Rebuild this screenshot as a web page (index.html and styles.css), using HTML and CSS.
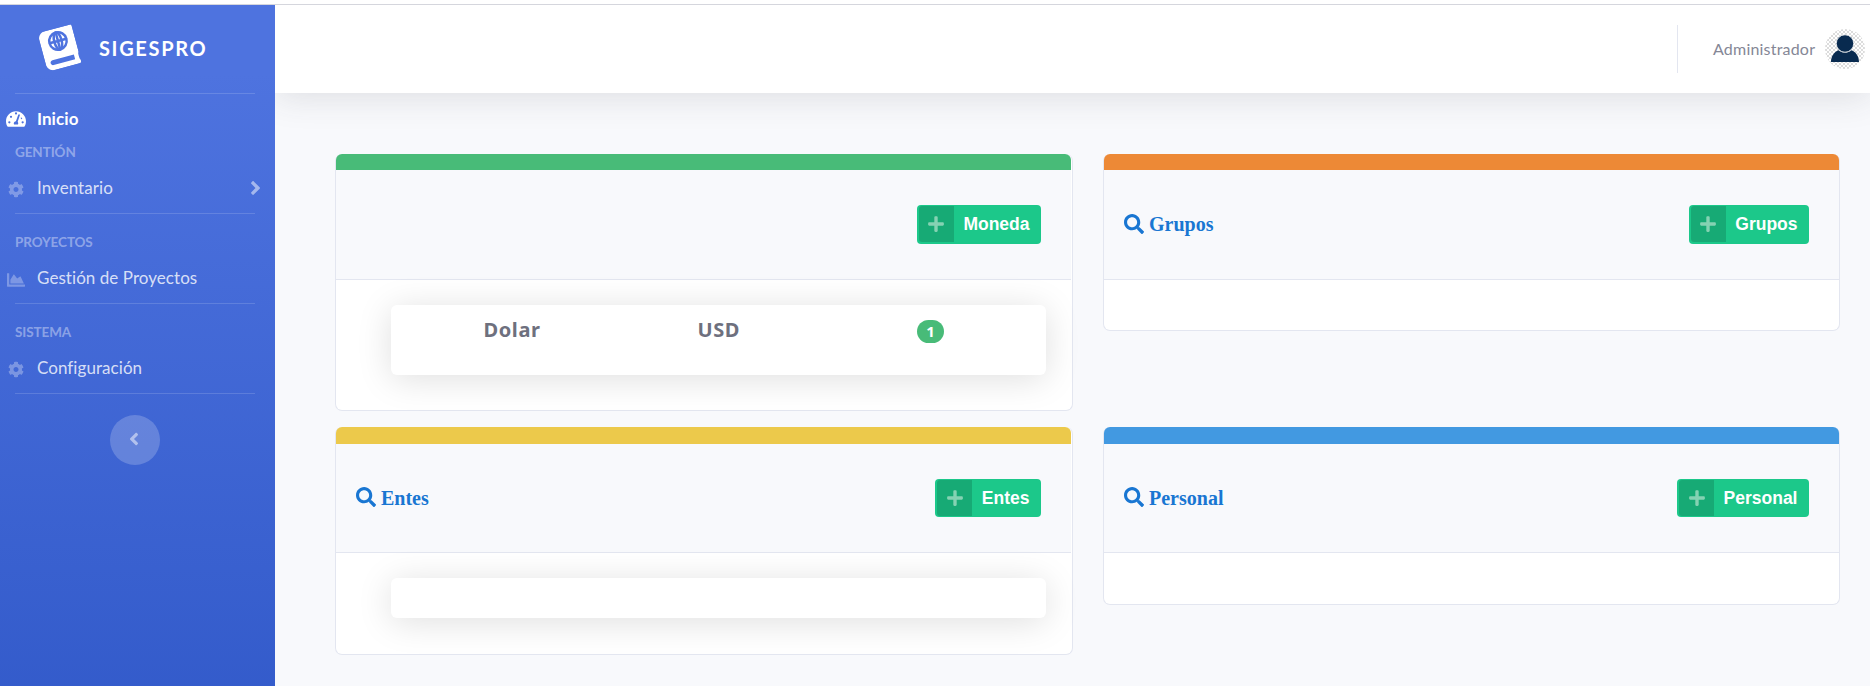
FILE: index.html
```html
<!DOCTYPE html>
<html lang="es">
<head>
<meta charset="utf-8">
<title>SIGESPRO</title>
<link rel="stylesheet" href="styles.css">
</head>
<body>
<svg class="defs" aria-hidden="true">
  <symbol id="cog" viewBox="0 0 512 512"><path d="M487.4 315.7l-42.6-24.6c4.3-23.200 4.300-47 0-70.200l42.600-24.600c4.900-2.800 7.100-8.600 5.500-14-11.100-35.600-30-67.800-54.700-94.600-3.800-4.100-10-5.100-14.800-2.300L380.800 110c-17.900-15.400-38.500-27.300-60.800-35.100V25.800c0-5.600-3.900-10.500-9.400-11.700-36.700-8.200-74.300-7.800-109.200 0-5.500 1.200-9.400 6.100-9.400 11.700V75c-22.200 7.900-42.800 19.800-60.800 35.100L88.700 85.500c-4.900-2.800-11-1.900-14.800 2.300-24.700 26.700-43.600 58.900-54.700 94.600-1.700 5.400.6 11.200 5.500 14L67.300 221c-4.300 23.200-4.300 47 0 70.200l-42.600 24.600c-4.900 2.800-7.100 8.600-5.500 14 11.100 35.600 30 67.800 54.700 94.600 3.800 4.100 10 5.100 14.800 2.300l42.600-24.600c17.900 15.400 38.500 27.300 60.800 35.100v49.200c0 5.600 3.900 10.500 9.400 11.700 36.700 8.200 74.300 7.800 109.200 0 5.500-1.200 9.400-6.100 9.400-11.700v-49.200c22.200-7.900 42.800-19.800 60.800-35.100l42.600 24.600c4.900 2.800 11 1.900 14.800-2.300 24.700-26.700 43.600-58.900 54.700-94.600 1.500-5.500-.7-11.300-5.600-14.100zM256 336c-44.100 0-80-35.900-80-80s35.900-80 80-80 80 35.900 80 80-35.900 80-80 80z"/></symbol>
  <symbol id="search" viewBox="0 0 512 512"><path d="M505 442.700L405.300 343c-4.500-4.500-10.600-7-17-7H372c27.600-35.300 44-79.700 44-128C416 93.100 322.900 0 208 0S0 93.100 0 208s93.100 208 208 208c48.300 0 92.700-16.400 128-44v16.300c0 6.400 2.500 12.500 7 17l99.700 99.700c9.400 9.400 24.600 9.400 33.900 0l28.300-28.300c9.400-9.400 9.400-24.600.1-34zM208 336c-70.700 0-128-57.200-128-128 0-70.700 57.200-128 128-128 70.700 0 128 57.200 128 128 0 70.700-57.200 128-128 128z"/></symbol>
  <symbol id="plus" viewBox="0 0 448 512"><path d="M416 208H272V64c0-17.670-14.330-32-32-32h-32c-17.670 0-32 14.330-32 32v144H32c-17.670 0-32 14.330-32 32v32c0 17.670 14.330 32 32 32h144v144c0 17.670 14.330 32 32 32h32c17.670 0 32-14.330 32-32V304h144c17.670 0 32-14.330 32-32v-32c0-17.670-14.330-32-32-32z"/></symbol>
  <symbol id="angle" viewBox="0 0 256 512"><path d="M224.300 273l-136 136c-9.400 9.400-24.600 9.400-33.900 0l-22.600-22.600c-9.400-9.400-9.400-24.600 0-33.900l96.400-96.400-96.400-96.400c-9.400-9.400-9.400-24.600 0-33.900L54.300 103c9.400-9.400 24.600-9.400 33.900 0l136 136c9.500 9.400 9.500 24.600.1 34z"/></symbol>
  <symbol id="chart" viewBox="0 0 512 512"><path d="M500 384c6.600 0 12 5.400 12 12v40c0 6.600-5.400 12-12 12H12c-6.600 0-12-5.400-12-12V76c0-6.600 5.400-12 12-12h40c6.600 0 12 5.400 12 12v308h436zM372.700 159.500L288 216l-85.300-113.700c-5.100-6.800-15.500-6.300-19.900 1L96 248v104h384l-89.900-187.800c-3.200-6.500-11.400-8.700-17.400-4.700z"/></symbol>
  <symbol id="gauge" viewBox="0 0 576 512"><path fill-rule="evenodd" d="M288 32C128.900 32 0 160.900 0 320c0 52.800 14.300 102.300 39.100 144.800 5.600 9.600 16.300 15.200 27.400 15.200h443c11.100 0 21.800-5.600 27.400-15.200C561.800 422.300 576 372.800 576 320c0-159.100-128.900-288-288-288zm-32 64a32 32 0 0 1 64 0a32 32 0 0 1-64 0zM64 352a32 32 0 0 1 64 0a32 32 0 0 1-64 0zM112 192a32 32 0 0 1 64 0a32 32 0 0 1-64 0zM448 352a32 32 0 0 1 64 0a32 32 0 0 1-64 0zM430 210a32 32 0 0 1 30 50a32 32 0 0 1-30-50zM399 151l-62 186c9 12 15 26 15 47 0 12-4 23-9 32H233c-6-9-9-20-9-32 0-34 27-62 61-64l68-184c4-13 18-20 30-15 13 4 20 17 16 30z"/></symbol>
</svg>
<div class="page">
  <aside class="sidebar">
    <a class="brand">
      <svg class="book" viewBox="0 0 448 512"><path class="cover" fill-rule="evenodd" d="M448 358.400V25.600c0-16-9.600-25.600-25.600-25.600H96C41.600 0 0 41.600 0 96v320c0 54.400 41.600 96 96 96h326.400c12.800 0 25.600-9.600 25.600-25.600v-16c0-6.400-3.200-12.800-9.600-19.200-3.200-16-3.200-60.800 0-73.600 6.400-3.200 9.600-9.600 9.600-19.200zM380 448H96c-18 0-32-14-32-32s14-32 32-32h284z"/><g class="lines"><circle cx="228" cy="164" r="112"/><ellipse cx="228" cy="164" rx="48" ry="112"/><path d="M116 164H340M228 52V276"/></g></svg>
      <span>SIGESPRO</span>
    </a>
    <nav>
      <div class="group first">
        <a class="item active"><svg class="gauge"><use href="#gauge"/></svg><span>Inicio</span></a>
        <h6 class="near">GENTIÓN</h6>
        <a class="item"><svg><use href="#cog"/></svg><span>Inventario</span><svg class="arrow"><use href="#angle"/></svg></a>
      </div>
      <div class="group">
        <h6>PROYECTOS</h6>
        <a class="item"><svg class="chart"><use href="#chart"/></svg><span>Gestión de Proyectos</span></a>
      </div>
      <div class="group">
        <h6>SISTEMA</h6>
        <a class="item"><svg><use href="#cog"/></svg><span>Configuración</span></a>
      </div>
    </nav>
    <button class="toggle"><svg><use href="#angle"/></svg></button>
  </aside>
  <div class="content">
    <header class="topbar">
      <div class="user">
        <span>Administrador</span>
        <svg class="avatar" viewBox="0 0 40 40">
          <defs><pattern id="check" width="4" height="4" patternUnits="userSpaceOnUse"><rect width="4" height="4" fill="#fff"/><path fill="#dcdcdc" d="M0 0h2v2H0zM2 2h2v2H2z"/></pattern></defs>
          <circle cx="20" cy="20" r="20" fill="url(#check)"/>
          <path fill="#082a4f" d="M6 33c0-5.500 3-10 7.500-11.800 3.500 3.200 9.500 3.200 13 0C31 23 34 27.500 34 33z"/>
          <circle cx="20" cy="14.500" r="8.700" fill="#082a4f" stroke="#f4f4f4" stroke-width=".8"/>
        </svg>
      </div>
    </header>
    <main class="grid">
      <section class="card green wide">
        <div class="bar"></div>
        <div class="head"><button class="add"><i><svg><use href="#plus"/></svg></i><span>Moneda</span></button></div>
        <div class="body"><div class="panel"><div class="row"><b>Dolar</b><b>USD</b><em>1</em></div></div></div>
      </section>
      <section class="card orange">
        <div class="bar"></div>
        <div class="head"><h4><svg><use href="#search"/></svg>Grupos</h4><button class="add"><i><svg><use href="#plus"/></svg></i><span>Grupos</span></button></div>
        <div class="body"></div>
      </section>
      <section class="card yellow wide second">
        <div class="bar"></div>
        <div class="head"><h4><svg><use href="#search"/></svg>Entes</h4><button class="add"><i><svg><use href="#plus"/></svg></i><span>Entes</span></button></div>
        <div class="body"><div class="panel"></div></div>
      </section>
      <section class="card blue second">
        <div class="bar"></div>
        <div class="head"><h4><svg><use href="#search"/></svg>Personal</h4><button class="add"><i><svg><use href="#plus"/></svg></i><span>Personal</span></button></div>
        <div class="body"></div>
      </section>
    </main>
  </div>
</div>
</body>
</html>
```
FILE: styles.css
```css
* { box-sizing: border-box; }
body { margin: 0; background: #fff; font-family: Lato, "Open Sans", sans-serif; font-variant-ligatures: none; overflow: hidden; }
svg { fill: currentColor; display: block; flex: none; }
h4, h6 { margin: 0; }
button { border: 0; padding: 0; }
.defs { display: none; }
.page { display: flex; height: 682px; margin-top: 4px; border-top: 1px solid #d5d6dd; }

.sidebar { width: 275px; flex: none; color: #fff; background: linear-gradient(180deg, #4e73df 10%, #3159c9 110%); }
.brand { display: flex; align-items: center; height: 88px; padding: 0 0 2px 40px; }
.brand span { margin-left: 18px; font-size: 20px; font-weight: 700; letter-spacing: 1.65px; line-height: 24px; }
.book { width: 35px; height: 40px; margin: 0 4px 0 2px; transform: rotate(-15deg); }
.lines { fill: none; stroke: #4e73df; stroke-width: 32; }
.group { height: 90px; padding-top: 19px; }
.group::before, nav::after { content: ""; display: block; width: 240px; height: 1px; margin-left: 15px; background: rgba(255,255,255,.15); }
.group::before { margin-top: -19px; }
.group.first { height: 120px; }
h6 { padding: 19px 0 0 15px; font-size: 13.500px; line-height: 18px; font-weight: 700; color: rgba(255,255,255,.4); letter-spacing: -.1px; }
h6.near { padding-top: 0; margin-top: 13px; }
.item { display: flex; align-items: center; height: 22px; padding-left: 8px; margin-top: 16px; font-size: 17px; line-height: 22px; letter-spacing: .06px; color: rgba(255,255,255,.8); }
.item svg { width: 16px; height: 17px; margin: 3px 13px 0 0; color: rgba(255,255,255,.3); }
.item .chart { width: 18px; height: 18px; margin: 3px 12px 0 -1px; }
.item .gauge { width: 20px; height: 18px; margin: -1px 11px 0 -2px; color: #fff; }
.item.active { color: #fff; font-weight: 700; }
.item .arrow { width: 11px; height: 22px; margin: -1px 14px 0 auto; color: rgba(255,255,255,.5); }
.group.first .active { margin-top: 14px; }
.toggle { display: flex; align-items: center; justify-content: center; width: 50px; height: 50px; margin: 21px 0 0 110px; border-radius: 50%; background: rgba(255,255,255,.2); color: rgba(255,255,255,.5); }
.toggle svg { width: 10px; height: 20px; margin: -3px 2px 0 0; transform: scaleX(-1); }

.content { flex: 1; min-width: 0; background: #f8f9fc; overflow: hidden; }
.topbar { display: flex; justify-content: flex-end; align-items: center; height: 88px; padding-right: 5px; background: #fff; box-shadow: 0 3px 35px rgba(58,59,69,.15); }
.user { display: flex; align-items: center; justify-content: space-between; height: 48px; width: 188px; padding-left: 35px; border-left: 1px solid #e3e6f0; color: #858796; font-size: 16px; letter-spacing: .2px; }
.user span { padding-bottom: 2px; }
.avatar { width: 40px; height: 40px; }

.grid { display: grid; grid-template-columns: 738px 737px; column-gap: 30px; row-gap: 16px; align-items: start; padding: 61px 0 0 60px; }
.card { display: flex; flex-direction: column; height: 177px; border: 1px solid #e3e6f0; border-top: 0; border-radius: 7px; background: #fff; }
.bar { height: 16px; border-radius: 6px 6px 0 0; }
.wide .bar, .wide .head { margin-right: 1px; }
.green .bar { background: #48bb78; }
.orange .bar { background: #ed8936; }
.yellow .bar { background: #ecc94b; }
.blue .bar { background: #4299e1; }
.head { display: flex; align-items: center; height: 110px; padding: 0 30px 0 20px; background: #f8f9fc; border-bottom: 1px solid #e3e6f0; }
h4 { display: flex; align-items: center; margin-top: -1px; font: bold 20px/24px "Liberation Serif", serif; color: #1976d2; }
h4 svg { width: 20px; height: 20px; margin: -1px 5px 0 0; }
.add { display: flex; align-items: center; height: 39px; margin-left: auto; padding: 1px 11.500px 2px 2px; border-radius: 4px; background: #1cc88a; color: #fff; font: bold 17.500px/20px "Liberation Sans", sans-serif; }
.add i { display: flex; align-items: center; justify-content: center; width: 35px; height: 36px; margin-right: 9.500px; background: rgba(0,0,0,.15); color: #85d2b3; border-radius: 3px 0 0 3px; }
.add svg { width: 16px; height: 18px; margin-top: -1px; }
.body { padding: 25px 26px 0 55px; }
.green { height: 257px; }
.yellow { height: 228px; }
.blue { height: 178px; }
.second .bar { height: 17px; }
.second .head { height: 109px; }
.second .add { height: 38px; padding-bottom: 1px; }
.panel { height: 70px; border-radius: 6px; background: #fff; box-shadow: 0 4px 35px rgba(0,0,0,.13); }
.yellow .panel { height: 40px; }
.row { display: grid; grid-template-columns: 214px 219.500px 1fr; padding: 10px 0 0 92.500px; color: #6e707e; font: 700 20px/30px "Noto Sans", sans-serif; letter-spacing: .6px; }
.row b { font-weight: 700; }
.row em { width: 27px; height: 23px; margin-top: 5px; border-radius: 12px; background: #48bb78; color: #fff; font: 700 15px/23px "Noto Sans", sans-serif; text-align: center; letter-spacing: 0; }
```
